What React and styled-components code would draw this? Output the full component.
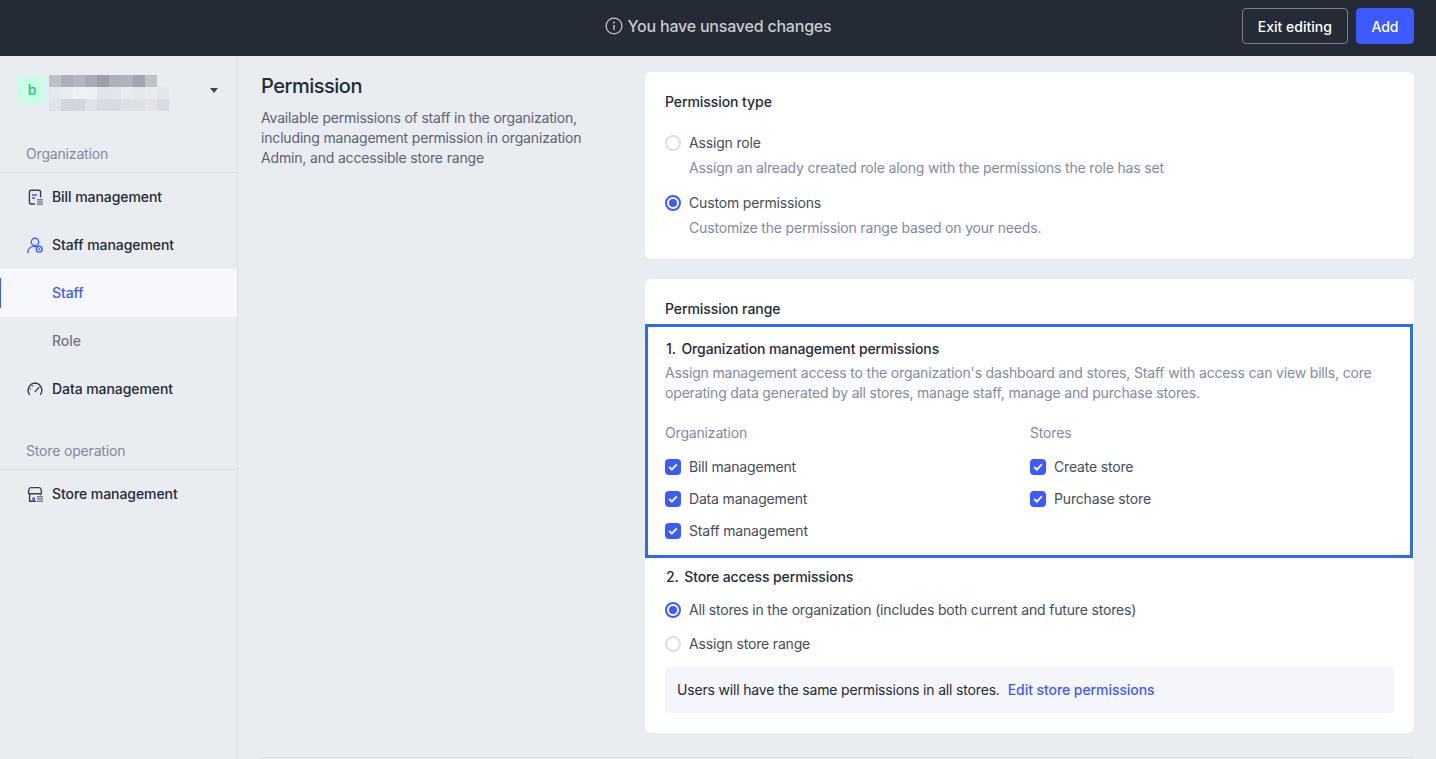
import React from 'react'
import styled, { createGlobalStyle } from 'styled-components'

const GlobalStyle = createGlobalStyle`
  html, body {
    margin: 0;
    height: 100%;
    overflow: hidden;
  }
  body {
    background: #e9ecf1;
    color: #252a37;
    font-family: Inter, "Liberation Sans", sans-serif;
    font-size: 14px;
    line-height: 20px;
    letter-spacing: -0.17px;
  }
  * { box-sizing: border-box; }
`

const Page = styled.div`
  height: 759px;
  display: flex;
  flex-direction: column;
  overflow: hidden;
`

const TopBar = styled.header`
  flex: none;
  height: 56px;
  padding: 0 22px 4px;
  background: #252a37;
  display: grid;
  grid-template-columns: 1fr auto 1fr;
  align-items: center;
`

const Notice = styled.div`
  grid-column: 2;
  display: flex;
  align-items: center;
  gap: 5px;
  color: #c8cad0;
  font-size: 16px;
  font-weight: 500;
  letter-spacing: -0.21px;
`

const TopActions = styled.div`
  grid-column: 3;
  justify-self: end;
  display: flex;
  gap: 8px;
`

const Button = styled.button`
  height: 36px;
  padding: 0 ${p => (p.$primary ? '14.5px' : '15px')};
  border: 1px solid ${p => (p.$primary ? '#3d5afe' : '#7c7f87')};
  border-radius: 4px;
  background: ${p => (p.$primary ? '#3d5afe' : 'transparent')};
  color: #fff;
  font: 500 14px Inter, "Liberation Sans", sans-serif;
`

const Body = styled.div`
  flex: 1;
  min-height: 0;
  display: flex;
`

const Sidebar = styled.aside`
  flex: none;
  width: 238px;
  border-right: 1px solid #d9dde8;
`

const OrgSwitcher = styled.div`
  height: 80px;
  padding: 7px 19px 0 18px;
  display: flex;
  align-items: flex-start;
`

const Avatar = styled.div`
  flex: none;
  width: 28px;
  height: 28px;
  margin-top: 13px;
  border-radius: 4px;
  background: #c9fde5;
  color: #12c98b;
  font-size: 14px;
  font-weight: 500;
  display: flex;
  align-items: center;
  justify-content: center;
`

const Mosaic = styled.svg`
  flex: none;
  margin-left: 3px;
  display: block;
`

const Caret = styled.div`
  margin: 25px 0 0 auto;
  width: 0;
  height: 0;
  border-left: 4.5px solid transparent;
  border-right: 4.5px solid transparent;
  border-top: 5px solid #3f4452;
`

const GroupLabel = styled.div`
  padding: 8px 26px;
  margin-top: ${p => (p.$spaced ? '20px' : '0')};
  border-bottom: 1px solid #d9dde8;
  color: #818aa3;
`

const NavItem = styled.div`
  position: relative;
  height: 48px;
  padding-left: ${p => (p.$sub ? '52px' : '26px')};
  display: flex;
  align-items: center;
  gap: 8px;
  font-weight: 500;
  letter-spacing: -0.07px;
  color: ${p => (p.$active ? '#3d5afe' : p.$muted ? '#6f7688' : '#252a37')};
  background: ${p => (p.$active ? '#f7f8fd' : 'transparent')};

  ${p =>
    p.$active &&
    `&::before {
      content: '';
      position: absolute;
      left: 0;
      top: 9px;
      bottom: 9px;
      width: 1px;
      background: #3d5afe;
    }`}
`

const Content = styled.main`
  flex: 1;
  min-width: 0;
  padding: 16px 22px 0 23px;
`

const Section = styled.section`
  display: grid;
  grid-template-columns: 384px 1fr;
  padding-bottom: 24px;
  border-bottom: 1px solid #d9dde8;
`

const Intro = styled.div`
  width: 330px;
`

const Title = styled.h2`
  margin: 0 0 8px;
  font-size: 20px;
  line-height: 28px;
  font-weight: 500;
  letter-spacing: -0.5px;
`

const Muted = styled.p`
  margin: 0;
  color: #5c6375;
`

const Cards = styled.div`
  display: flex;
  flex-direction: column;
  gap: 20px;
`

const Card = styled.div`
  background: #fff;
  border-radius: 6px;
  padding: 20px 20px ${p => p.$bottom || 20}px;
`

const CardTitle = styled.div`
  font-weight: 500;
  letter-spacing: -0.07px;
`

const Option = styled.label`
  display: flex;
  align-items: center;
  gap: 8px;
  color: #464c5c;
  margin-top: ${p => p.$top || 0}px;
`

const Radio = styled.span`
  flex: none;
  width: 16px;
  height: 16px;
  border-radius: 50%;
  border: ${p => (p.$on ? '2px solid #3d5afe' : '2px solid #dcdfeb')};
  display: flex;
  align-items: center;
  justify-content: center;

  &::after {
    content: '';
    display: ${p => (p.$on ? 'block' : 'none')};
    width: 8px;
    height: 8px;
    border-radius: 50%;
    background: #3d5afe;
  }
`

const Hint = styled.div`
  margin: 5px 0 0 24px;
  color: #818aa3;
`

const Frame = styled.div`
  margin: 5px -19px 0 -20px;
  padding: 12px 17px 8px 17px;
  border: 3px solid #2f6bf0;
`

const Heading = styled.div`
  font-weight: 500;
  letter-spacing: -0.12px;
  padding-left: 1px;
  margin-top: ${p => p.$top || 0}px;
`

const HeadingNumber = styled.span`
  margin-right: 2px;
`

const FrameText = styled.div`
  margin-top: 4px;
  color: #818aa3;
`

const Columns = styled.div`
  margin-top: 20px;
  display: grid;
  grid-template-columns: 365px 1fr;
`

const ColumnTitle = styled.div`
  color: #818aa3;
  margin-bottom: 8px;
`

const Check = styled.span`
  flex: none;
  width: 16px;
  height: 16px;
  border-radius: 4px;
  background: #3d5afe;
  display: flex;
  align-items: center;
  justify-content: center;
`

const CheckRow = styled(Option)`
  height: 32px;
  margin: 0;
`

const RadioRow = styled(Option)`
  height: 20px;
`

const InfoBox = styled.div`
  margin-top: 13px;
  height: 46px;
  padding: 0 12px;
  border-radius: 4px;
  background: #f5f6fb;
  display: flex;
  align-items: center;
  gap: 8px;
`

const TextLink = styled.a`
  color: #3d5afe;
  font-weight: 500;
  letter-spacing: -0.07px;
`

const blue = '#3d5afe'
const ink = '#3a3f4d'

function StackBars() {
  return <path d="M11 11h6v1.6h-6zM11 13.2h6v1.6h-6zM11 15.4h6V17h-6z" fill="#7d8290" />
}

function BillIcon() {
  return (
    <svg width="18" height="18" viewBox="0 0 18 18" fill="none">
      <path d="M14.6 9.5V4c0-1.1-.7-1.8-1.8-1.8H5.2c-1.1 0-1.8.7-1.8 1.8v10.2c0 1.1.7 1.8 1.8 1.8H9" stroke={ink} strokeWidth="1.4" />
      <path d="M6 7h5M6 10h3" stroke={blue} strokeWidth="1.3" />
      <StackBars />
    </svg>
  )
}

function StaffIcon() {
  return (
    <svg width="18" height="18" viewBox="0 0 18 18" fill="none" stroke={blue} strokeWidth="1.4">
      <circle cx="9" cy="6" r="3.7" />
      <path d="M1.8 16.6c0-3.6 2.6-6.2 6.2-6.2.7 0 1.2.1 1.8.2" strokeLinecap="round" />
      <circle cx="13.2" cy="13.2" r="2.9" />
      <circle cx="13.2" cy="13.2" r="1" fill={blue} stroke="none" />
    </svg>
  )
}

function GaugeIcon() {
  return (
    <svg width="18" height="18" viewBox="0 0 18 18" fill="none" strokeWidth="1.4">
      <path d="M3.4 14.4A7.4 7.4 0 0 1 9 3a7.4 7.4 0 0 1 5.6 11.4" stroke={ink} strokeLinecap="round" />
      <path d="M9.2 11.6l3.6-4" stroke={ink} strokeLinecap="round" />
      <circle cx="4.4" cy="9" r=".8" fill={blue} />
      <circle cx="6.4" cy="5.9" r=".8" fill={blue} />
    </svg>
  )
}

function StoreIcon() {
  return (
    <svg width="18" height="18" viewBox="0 0 18 18" fill="none">
      <path d="M5 2.6h8c1.2 0 2 .8 2.1 1.9l.4 3.2c0 .6-.5 1.1-1.1 1.1H3.6c-.6 0-1.1-.5-1.1-1.1l.4-3.2C3 3.4 3.8 2.6 5 2.6z" stroke={ink} strokeWidth="1.4" strokeLinejoin="round" />
      <path d="M3.6 8.8v7.4H10M14.6 8.8v1.4" stroke={ink} strokeWidth="1.4" />
      <path d="M6.3 12.4h2.6v3.2H6.3z" fill={blue} />
      <StackBars />
    </svg>
  )
}

function InfoIcon() {
  return (
    <svg width="18" height="18" viewBox="0 0 18 18" fill="none" stroke="#c8cad0" strokeWidth="1.2">
      <circle cx="9" cy="9" r="7.9" />
      <path d="M9 8v5" strokeWidth="1.4" />
      <circle cx="9" cy="5.5" r=".9" fill="#c8cad0" stroke="none" />
    </svg>
  )
}

function Tick() {
  return (
    <svg width="10" height="8" viewBox="0 0 10 8" fill="none">
      <path d="M1.2 4l2.6 2.6L8.8 1.4" stroke="#fff" strokeWidth="1.9" strokeLinejoin="round" />
    </svg>
  )
}

// pixelated organization name, blurred in the picture
const mosaicRows = [
  ['#eaecf1', '#eaecf1', '#e9ebf0', '#e9ebf0', '#e9ebf0', '#e9ecf1', '#e9ecf1', '#e9ebf0', '#e9ecf1', '#e9ecf1'],
  ['#bdc0c7', '#adb0b8', '#b4b7be', '#a8abb4', '#9c9fa9', '#aeb1b9', '#b0b3bb', '#a3a6af', '#bfc2c9', '#e9ecf1'],
  ['#e4e7ed', '#eaecf1', '#eff1f5', '#eef0f4', '#e2e4eb', '#e3e5ec', '#eaecf1', '#e5e7ee', '#eaecf1', '#e3e6ec'],
  ['#e0e3e9', '#d2d5df', '#d3d6df', '#e0e2e9', '#d9dce4', '#d8dbe3', '#dfe1e8', '#dee0e8', '#e2e4ea', '#d9dce4'],
]

function NameMosaic() {
  return (
    <Mosaic width="120" height="48" viewBox="0 0 120 48" shapeRendering="crispEdges">
      {mosaicRows.map((row, y) =>
        row.map((c, x) => <rect key={x + '-' + y} x={x * 12} y={y * 12} width="12" height="12" fill={c} />)
      )}
    </Mosaic>
  )
}

export default function App() {
  return (
    <Page>
      <GlobalStyle />
      <TopBar>
        <Notice>
          <InfoIcon />
          You have unsaved changes
        </Notice>
        <TopActions>
          <Button>Exit editing</Button>
          <Button $primary>Add</Button>
        </TopActions>
      </TopBar>
      <Body>
        <Sidebar>
          <OrgSwitcher>
            <Avatar>b</Avatar>
            <NameMosaic />
            <Caret />
          </OrgSwitcher>
          <GroupLabel>Organization</GroupLabel>
          <NavItem><BillIcon />Bill management</NavItem>
          <NavItem><StaffIcon />Staff management</NavItem>
          <NavItem $sub $active>Staff</NavItem>
          <NavItem $sub $muted>Role</NavItem>
          <NavItem><GaugeIcon />Data management</NavItem>
          <GroupLabel $spaced>Store operation</GroupLabel>
          <NavItem><StoreIcon />Store management</NavItem>
        </Sidebar>
        <Content>
          <Section>
            <Intro>
              <Title>Permission</Title>
              <Muted>
                Available permissions of staff in the organization, including management permission in
                organization Admin, and accessible store range
              </Muted>
            </Intro>
            <Cards>
              <Card $bottom={21}>
                <CardTitle>Permission type</CardTitle>
                <Option $top={21}><Radio />Assign role</Option>
                <Hint>Assign an already created role along with the permissions the role has set</Hint>
                <Option $top={15}><Radio $on />Custom permissions</Option>
                <Hint>Customize the permission range based on your needs.</Hint>
              </Card>
              <Card>
                <CardTitle>Permission range</CardTitle>
                <Frame>
                  <Heading><HeadingNumber>1.</HeadingNumber> Organization management permissions</Heading>
                  <FrameText>
                    Assign management access to the organization's dashboard and stores, Staff with access can view
                    bills, core operating data generated by all stores, manage staff, manage and purchase stores.
                  </FrameText>
                  <Columns>
                    <div>
                      <ColumnTitle>Organization</ColumnTitle>
                      <CheckRow><Check><Tick /></Check>Bill management</CheckRow>
                      <CheckRow><Check><Tick /></Check>Data management</CheckRow>
                      <CheckRow><Check><Tick /></Check>Staff management</CheckRow>
                    </div>
                    <div>
                      <ColumnTitle>Stores</ColumnTitle>
                      <CheckRow><Check><Tick /></Check>Create store</CheckRow>
                      <CheckRow><Check><Tick /></Check>Purchase store</CheckRow>
                    </div>
                  </Columns>
                </Frame>
                <Heading $top={9}><HeadingNumber>2.</HeadingNumber> Store access permissions</Heading>
                <RadioRow $top={13}><Radio $on />All stores in the organization (includes both current and future stores)</RadioRow>
                <RadioRow $top={14}><Radio />Assign store range</RadioRow>
                <InfoBox>
                  Users will have the same permissions in all stores.
                  <TextLink>Edit store permissions</TextLink>
                </InfoBox>
              </Card>
            </Cards>
          </Section>
        </Content>
      </Body>
    </Page>
  )
}
